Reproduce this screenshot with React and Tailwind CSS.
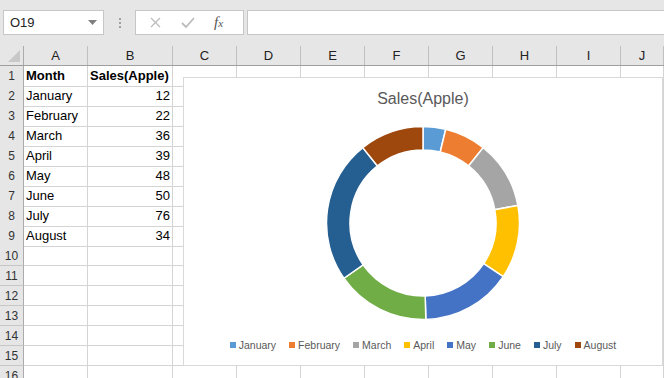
const cols = ['A', 'B', 'C', 'D', 'E', 'F', 'G', 'H', 'I', 'J']

const data = [
  { month: 'January', value: 12, color: '#5B9BD5' },
  { month: 'February', value: 22, color: '#ED7D31' },
  { month: 'March', value: 36, color: '#A5A5A5' },
  { month: 'April', value: 39, color: '#FFC000' },
  { month: 'May', value: 48, color: '#4472C4' },
  { month: 'June', value: 50, color: '#70AD47' },
  { month: 'July', value: 76, color: '#255E91' },
  { month: 'August', value: 34, color: '#9E480E' },
]

const gridCols = 'grid grid-cols-[24px_64px_85px_64px_64px_64px_64px_64px_64px_64px_1fr]'

function pt(cx, cy, r, a) {
  return [cx + r * Math.sin(a), cy - r * Math.cos(a)]
}

function slice(cx, cy, R, r, a0, a1) {
  const large = a1 - a0 > Math.PI ? 1 : 0
  const [x0, y0] = pt(cx, cy, R, a0)
  const [x1, y1] = pt(cx, cy, R, a1)
  const [x2, y2] = pt(cx, cy, r, a1)
  const [x3, y3] = pt(cx, cy, r, a0)
  return `M${x0} ${y0} A${R} ${R} 0 ${large} 1 ${x1} ${y1} L${x2} ${y2} A${r} ${r} 0 ${large} 0 ${x3} ${y3} Z`
}

function Donut() {
  const total = data.reduce((s, d) => s + d.value, 0)
  let acc = 0
  return (
    <svg width="200" height="200" viewBox="0 0 200 200">
      {data.map((d) => {
        const a0 = (acc / total) * Math.PI * 2
        acc += d.value
        const a1 = (acc / total) * Math.PI * 2
        return (
          <path
            key={d.month}
            d={slice(100, 100, 96.5, 73, a0, a1)}
            fill={d.color}
            stroke="#fff"
            strokeWidth="1.5"
          />
        )
      })}
    </svg>
  )
}

function Chart() {
  return (
    <div className="absolute left-[183px] top-[77px] flex h-[289px] w-[480px] flex-col items-center border border-[#d9d9d9] bg-white">
      <div className="mt-[11px] h-[20px] text-[16px] leading-[20px] text-[#595959]">Sales(Apple)</div>
      <div className="mt-[14px]">
        <Donut />
      </div>
      <div className="mt-[15px] flex items-center gap-[13px] text-[10.5px] leading-[14px] text-[#595959]">
        {data.map((d) => (
          <div key={d.month} className="flex items-center gap-[3px]">
            <span className="h-[6px] w-[6px]" style={{ backgroundColor: d.color }} />
            <span>{d.month}</span>
          </div>
        ))}
      </div>
    </div>
  )
}

function FormulaBar() {
  return (
    <div className="flex h-[46px] items-start bg-[#e6e6e6] pl-[3px] pt-[10px]">
      <div className="relative flex h-[25px] w-[101px] items-center border border-[#c6c6c6] bg-white pl-[6px] text-[13px] text-[#222]">
        O19
        <svg className="absolute right-[6px] top-[9px]" width="9" height="5" viewBox="0 0 9 5">
          <path d="M0 0h9L4.5 5z" fill="#808080" />
        </svg>
      </div>
      <div className="flex h-[25px] w-[31px] flex-col items-center justify-center gap-[2px]">
        <span className="h-[2px] w-[2px] bg-[#a0a0a0]" />
        <span className="h-[2px] w-[2px] bg-[#a0a0a0]" />
        <span className="h-[2px] w-[2px] bg-[#a0a0a0]" />
      </div>
      <div className="flex h-[25px] w-[109px] items-center border border-[#c6c6c6] bg-white">
        <svg className="ml-[14px]" width="11" height="11" viewBox="0 0 11 11">
          <path d="M1 1l9 9M10 1l-9 9" stroke="#bcbcbc" strokeWidth="1.3" />
        </svg>
        <svg className="ml-[20px]" width="14" height="11" viewBox="0 0 14 11">
          <path d="M1 6l4 4L13 1" stroke="#bcbcbc" strokeWidth="1.8" fill="none" />
        </svg>
        <span className="ml-[19px] font-['Liberation_Serif'] text-[15px] italic leading-none text-[#555]">
          f<span className="text-[11px]">x</span>
        </span>
      </div>
      <div className="ml-[3px] h-[25px] flex-1 border-y border-l border-[#c6c6c6] bg-white" />
    </div>
  )
}

function HeaderRow() {
  return (
    <div className={`${gridCols} h-[20px] border-b border-[#9e9e9e] bg-[#e6e6e6]`}>
      <div className="relative border-r border-[#ababab]">
        <svg className="absolute bottom-[3px] right-[3px]" width="12" height="12" viewBox="0 0 12 12">
          <path d="M12 0v12H0z" fill="#c8c8c8" />
        </svg>
      </div>
      {cols.map((c) => (
        <div
          key={c}
          className="flex items-center justify-center border-r border-[#c0c0c0] text-[13px] leading-none text-[#222]"
        >
          {c}
        </div>
      ))}
    </div>
  )
}

function Row({ n, a, b, bold }) {
  return (
    <div className={`${gridCols} h-[20px] bg-white`}>
      <div className="flex items-center justify-center border-r border-b border-r-[#ababab] border-b-[#c6c6c6] bg-[#e6e6e6] text-[12px] text-[#333]">
        {n}
      </div>
      <div className={`flex items-center border-r border-b border-[#d4d4d4] pl-[2px] text-[13px] text-black ${bold ? 'font-bold' : ''}`}>
        {a}
      </div>
      <div
        className={`flex items-center border-r border-b border-[#d4d4d4] text-[13px] text-black ${
          bold ? 'justify-start pl-[2px] font-bold' : 'justify-end pr-[2px]'
        }`}
      >
        {b}
      </div>
      {cols.slice(2).map((c) => (
        <div key={c} className="border-r border-b border-[#d4d4d4]" />
      ))}
    </div>
  )
}

export default function App() {
  const rows = [{ a: 'Month', b: 'Sales(Apple)', bold: true }, ...data.map((d) => ({ a: d.month, b: d.value }))]
  while (rows.length < 16) rows.push({})
  return (
    <div className="relative h-[378px] w-[664px] overflow-hidden bg-white font-['Liberation_Sans',Arial,sans-serif]">
      <FormulaBar />
      <HeaderRow />
      {rows.map((r, i) => (
        <Row key={i} n={i + 1} a={r.a} b={r.b} bold={r.bold} />
      ))}
      <Chart />
    </div>
  )
}
